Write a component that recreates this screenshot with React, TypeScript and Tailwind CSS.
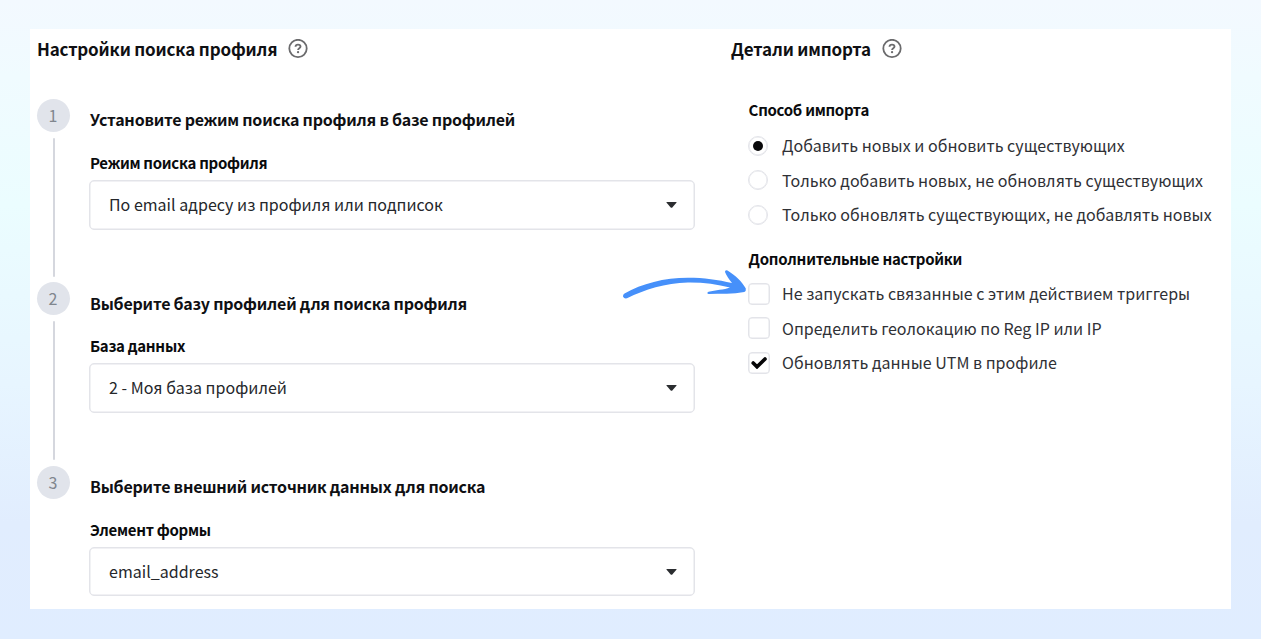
import React from "react";

function HelpIcon() {
  return (
    <svg className="mt-px size-5 shrink-0" viewBox="0 0 20 20" fill="none" stroke="#6b6b6d">
      <circle cx="10" cy="9.500" r="8.700" strokeWidth="1.800" />
      <path d="M7.500 7.800c.1-1.500 1.100-2.200 2.500-2.200s2.500.8 2.500 2c0 1.700-2.400 1.600-2.400 3.300" strokeWidth="1.900" />
      <circle cx="10.050" cy="13.200" r="1.150" fill="#6b6b6d" stroke="none" />
    </svg>
  );
}

function Select({ value }: { value: string }) {
  return (
    <div className="flex h-[49.5px] w-[606px] items-center justify-between rounded-[5px] border border-[#e3e4e9] pr-[17px] pl-[19px] shadow-[inset_0_0_0_0.5px_#e3e4e9]">
      <span className="pb-[2px] text-[16px] tracking-[0.02px] whitespace-nowrap text-[#25272b]">{value}</span>
      <svg className="h-[6px] w-[11px]" viewBox="0 0 11 6">
        <path d="M1 0h9q1 0 .4.800L6.300 5.400q-.8.800-1.600 0L.6.800Q0 0 1 0Z" fill="#2b2d30" />
      </svg>
    </div>
  );
}

interface StepProps {
  number: number;
  title: string;
  label: string;
  value: string;
  last?: boolean;
}

function Step({ number, title, label, value, last }: StepProps) {
  return (
    <li className="flex h-[183.3px] gap-5">
      <div className="flex w-[33px] shrink-0 flex-col items-center">
        <span className="flex size-[33px] shrink-0 items-center justify-center rounded-full bg-[#e1e4eb] pr-px pb-px text-[16px] leading-none text-[#80868e]">
          {number}
        </span>
        {!last && <span className="mt-[6px] h-[139px] w-[2px] rounded-full bg-[#d5d7de]" />}
      </div>
      <div className="flex flex-col items-start">
        <h3 className="mt-[8.300px] h-6 text-[16px] font-bold leading-6 tracking-[-0.22px] whitespace-nowrap text-[#0f1013]">{title}</h3>
        <label className="mt-[19.700px] h-6 text-[15px] font-bold leading-6 tracking-[-0.3px] whitespace-nowrap text-[#0a0b0d]">{label}</label>
        <div className="mt-[5.200px] -ml-px">
          <Select value={value} />
        </div>
      </div>
    </li>
  );
}

function Radio({ label, checked }: { label: string; checked?: boolean }) {
  return (
    <div className="flex h-[34.500px] items-center gap-[14px]">
      <span className="flex size-5 shrink-0 items-center justify-center rounded-full border border-[#e3e4e9] shadow-[inset_0_0_0_0.5px_#e3e4e9]">
        {checked && <span className="size-[10px] rounded-full bg-[#08080a]" />}
      </span>
      <span className="pb-px text-[16px] tracking-[0.02px] whitespace-nowrap text-[#303136]">{label}</span>
    </div>
  );
}

function Checkbox({ label, checked }: { label: string; checked?: boolean }) {
  return (
    <div className="flex h-[34.500px] items-center gap-[12px]">
      <span className="flex size-[22px] shrink-0 items-center justify-center rounded-[4px] border border-[#e3e4e9] shadow-[inset_0_0_0_0.5px_#e3e4e9]">
        {checked && (
          <svg className="h-[12px] w-[16px] shrink-0" viewBox="0 0 16 12" fill="none">
            <path d="M2.200 6 6 9.800 14 2" stroke="#050506" strokeWidth="3.600" strokeLinecap="round" />
          </svg>
        )}
      </span>
      <span className="pb-px text-[16px] tracking-[0.02px] whitespace-nowrap text-[#303136]">{label}</span>
    </div>
  );
}

function SectionHeader({ children }: { children: string }) {
  return (
    <header className="flex h-[38px] items-center gap-[11px]">
      <h2 className="text-[17px] font-bold leading-none tracking-[-0.17px] whitespace-nowrap text-[#0f1013]">{children}</h2>
      <HelpIcon />
    </header>
  );
}

function GroupTitle({ children }: { children: string }) {
  return (
    <h3 className="h-6 pl-[0.600px] text-[15px] font-bold leading-6 tracking-[-0.3px] whitespace-nowrap text-[#0a0b0d]">{children}</h3>
  );
}

export default function App() {
  return (
    <div className="h-[639px] w-[1261px] bg-[linear-gradient(to_bottom,#f3f9ff_0%,#f0fbff_12%,#ebfdff_32%,#e7f5ff_60%,#e1edfe_82%,#e0edff_100%)] px-[30px] pt-[29px] font-['Noto_Sans_CJK_SC',sans-serif]">
      <main className="relative flex h-[580px] w-[1201px] bg-white pl-[7px]">
        <section className="w-[694px] shrink-0">
          <SectionHeader>Настройки поиска профиля</SectionHeader>
          <ol className="mt-[32px]">
            <Step
              number={1}
              title="Установите режим поиска профиля в базе профилей"
              label="Режим поиска профиля"
              value="По email адресу из профиля или подписок"
            />
            <Step
              number={2}
              title="Выберите базу профилей для поиска профиля"
              label="База данных"
              value="2 - Моя база профилей"
            />
            <Step
              number={3}
              title="Выберите внешний источник данных для поиска"
              label="Элемент формы"
              value="email_address"
              last
            />
          </ol>
        </section>
        <section className="flex-1">
          <SectionHeader>Детали импорта</SectionHeader>
          <div className="mt-[31px] pl-[17px]">
            <GroupTitle>Способ импорта</GroupTitle>
            <div className="mt-[6.500px]">
              <Radio label="Добавить новых и обновить существующих" checked />
              <Radio label="Только добавить новых, не обновлять существующих" />
              <Radio label="Только обновлять существующих, не добавлять новых" />
            </div>
            <div className="mt-[15px]">
              <GroupTitle>Дополнительные настройки</GroupTitle>
            </div>
            <div className="mt-[5.500px]">
              <Checkbox label="Не запускать связанные с этим действием триггеры" />
              <Checkbox label="Определить геолокацию по Reg IP или IP" />
              <Checkbox label="Обновлять данные UTM в профиле" checked />
            </div>
          </div>
        </section>
        <svg className="absolute top-[239px] left-[591px] h-[32px] w-[127px]" viewBox="621 268 127 32">
          <path
            d="M624.500 293.500C642 283.500 664 277.700 688 277.700C704 277.700 718 279.700 732 283C729 279.500 726.500 275.500 725 272Q725 269.500 727.500 270.500C735.500 275.500 742 281.500 745.800 288.500Q746.300 291 744.300 292C733 294.200 721 293.600 708.500 294Q706 293.200 708.500 291.800C715.500 290 724 289.800 730 287.500C717 284.300 703 282.300 688 282.500C665 283 645 289.500 627 298.300Q624 299 623 296.500Q622.800 294.500 624.500 293.500Z"
            fill="#4690fa"
          />
        </svg>
      </main>
    </div>
  );
}
